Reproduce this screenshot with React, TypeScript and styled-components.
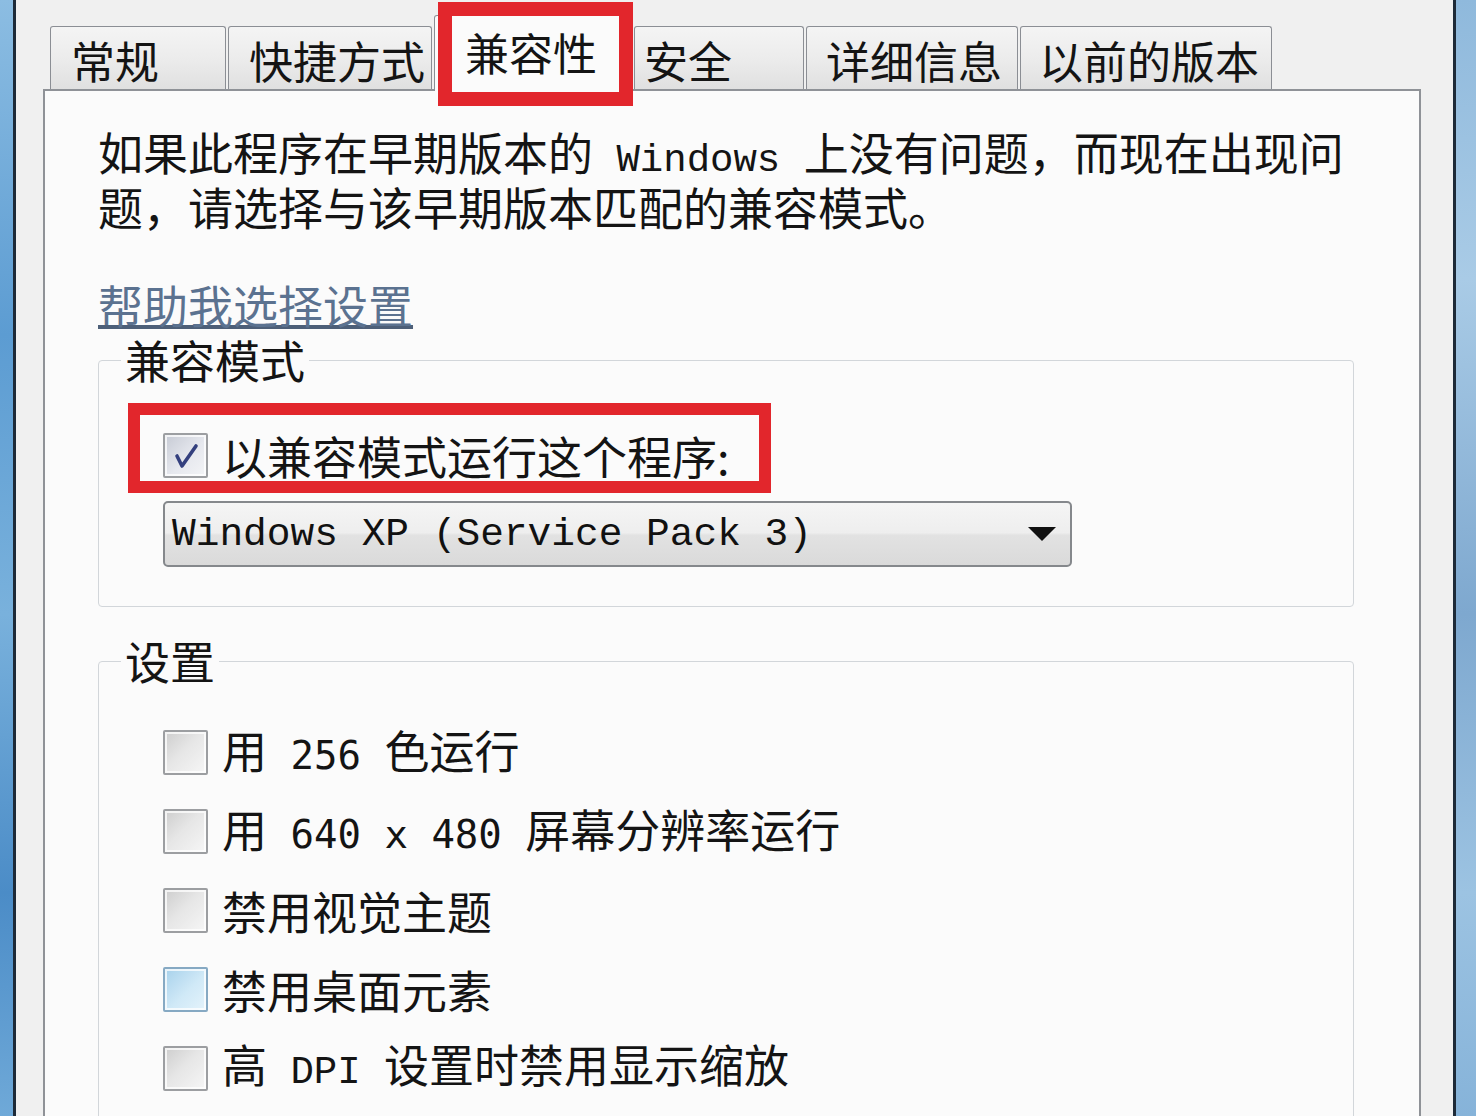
import React from "react";
import styled, { createGlobalStyle } from "styled-components";

// Windows 7 属性对话框 - 兼容性页（放大截图）

type BoxState = "off" | "hover" | "checked";

interface TabInfo {
  label: string;
  width: number;
  pad: number;
  active?: boolean;
}

const tabs: TabInfo[] = [
  { label: "常规", width: 176, pad: 20 },
  { label: "快捷方式", width: 204, pad: 20 },
  { label: "兼容性", width: 198, pad: 30, active: true },
  { label: "安全", width: 170, pad: 9 },
  { label: "详细信息", width: 212, pad: 19 },
  { label: "以前的版本", width: 252, pad: 18 },
];

const GlobalStyle = createGlobalStyle`
  html, body {
    margin: 0;
    padding: 0;
    background: #f0f0f0;
  }
  body {
    font-family: "Noto Sans CJK SC", "Liberation Sans", sans-serif;
    color: #161616;
  }
  * {
    box-sizing: border-box;
  }
`;

const Latin = styled.span<{ $face: "serif" | "sans" }>`
  font-family: ${(p) =>
      p.$face === "serif" ? '"Liberation Mono"' : '"DejaVu Sans Mono"'},
    monospace;
  font-size: 39px;
  white-space: pre;
`;

const settings: { key: string; state: BoxState; label: React.ReactNode }[] = [
  {
    key: "256",
    state: "off",
    label: (
      <>
        用<Latin $face="sans"> 256 </Latin>色运行
      </>
    ),
  },
  {
    key: "640",
    state: "off",
    label: (
      <>
        用<Latin $face="sans"> 640 x 480 </Latin>屏幕分辨率运行
      </>
    ),
  },
  { key: "theme", state: "off", label: "禁用视觉主题" },
  { key: "desktop", state: "hover", label: "禁用桌面元素" },
  {
    key: "dpi",
    state: "off",
    label: (
      <>
        高<Latin $face="serif"> DPI </Latin>设置时禁用显示缩放
      </>
    ),
  },
];

const CheckMark = () => (
  <svg width="30" height="30" viewBox="0 0 30 30">
    <polyline
      points="6,15 11,25 25,5"
      fill="none"
      stroke="#34407e"
      strokeWidth="3.6"
      strokeLinecap="round"
      strokeLinejoin="round"
    />
  </svg>
);

const App = () => {
  return (
    <Screen>
      <GlobalStyle />
      <WindowEdge $side="left" />
      <Dialog>
        <TabStrip>
          {tabs.map((tab) => (
            <Tab
              key={tab.label}
              $width={tab.width}
              $pad={tab.pad}
              $active={tab.active}
            >
              {tab.label}
              {tab.active && (
                <RedFrame $top={-14} $left={3} $width={195} $height={104} $thick={14} />
              )}
            </Tab>
          ))}
        </TabStrip>
        <Panel>
          <Intro>
            如果此程序在早期版本的<Latin $face="serif"> Windows </Latin>上没有问题，而现在出现问
            <br />
            题，请选择与该早期版本匹配的兼容模式。
          </Intro>
          <HelpLink href="#">帮助我选择设置</HelpLink>

          <Group $gap={9} $bottom={39}>
            <GroupTitle>兼容模式</GroupTitle>
            <GroupBody $top={50} $gap={23}>
              <CheckRow>
                <Box $state="checked">
                  <CheckMark />
                </Box>
                <Label>以兼容模式运行这个程序:</Label>
                <RedFrame $top={-30} $left={-35} $width={643} $height={90} $thick={12} />
              </CheckRow>
              <Select>
                <span>Windows XP (Service Pack 3)</span>
                <svg width="28" height="14" viewBox="0 0 28 14">
                  <polygon points="0,0 28,0 14,14" fill="#111" />
                </svg>
              </Select>
            </GroupBody>
          </Group>

          <Group $gap={31} $bottom={60}>
            <GroupTitle>设置</GroupTitle>
            <GroupBody $top={46} $gap={34}>
              {settings.map((item) => (
                <CheckRow key={item.key}>
                  <Box $state={item.state} />
                  <Label>{item.label}</Label>
                </CheckRow>
              ))}
            </GroupBody>
          </Group>
        </Panel>
      </Dialog>
      <WindowEdge $side="right" />
    </Screen>
  );
};

const Screen = styled.div`
  display: flex;
  width: 1476px;
  height: 1116px;
  overflow: hidden;
`;

const WindowEdge = styled.div<{ $side: "left" | "right" }>`
  flex: none;
  width: ${(p) => (p.$side === "left" ? 16 : 23)}px;
  background: ${(p) =>
    p.$side === "left"
      ? "linear-gradient(180deg, #8cbde2 0%, #5c9cd2 30%, #79b1dc 55%, #4b8cc7 80%, #6fa9d8 100%)"
      : "linear-gradient(180deg, #8fb9dc 0%, #a9cbe6 25%, #7ea8cf 55%, #9cc3e2 80%, #86b3d9 100%)"};
  border-${(p) => (p.$side === "left" ? "right" : "left")}: 3px solid #1d2a38;
`;

const Dialog = styled.div`
  flex: 1;
  min-width: 0;
  display: flex;
  flex-direction: column;
  padding: 15px 32px 0 27px;
  background: #f0f0f0;
`;

const TabStrip = styled.div`
  position: relative;
  z-index: 1;
  display: flex;
  align-items: flex-end;
  gap: 2px;
  height: 74px;
  padding-left: 7px;
`;

const Tab = styled.div<{ $width: number; $pad: number; $active?: boolean }>`
  position: relative;
  flex: none;
  display: flex;
  align-items: center;
  width: ${(p) => p.$width}px;
  height: ${(p) => (p.$active ? 76 : 63)}px;
  margin-bottom: ${(p) => (p.$active ? -2 : 0)}px;
  padding: ${(p) => (p.$active ? 0 : 4)}px 0 ${(p) => (p.$active ? 4 : 0)}px
    ${(p) => p.$pad}px;
  border: 1px solid #8b8e94;
  border-bottom: none;
  border-radius: 3px 3px 0 0;
  background: ${(p) =>
    p.$active
      ? "#fbfbfb"
      : "linear-gradient(180deg, #f4f4f4 0%, #ececec 50%, #e0e0e0 100%)"};
  font-size: 44px;
  line-height: 46px;
  white-space: nowrap;
  color: #141414;
`;

const RedFrame = styled.span<{
  $top: number;
  $left: number;
  $width: number;
  $height: number;
  $thick: number;
}>`
  position: absolute;
  top: ${(p) => p.$top}px;
  left: ${(p) => p.$left}px;
  width: ${(p) => p.$width}px;
  height: ${(p) => p.$height}px;
  border: ${(p) => p.$thick}px solid #e2262c;
  pointer-events: none;
`;

const Panel = styled.div`
  flex: 1;
  background: #fbfbfb;
  border: 2px solid #8f9297;
  border-bottom: none;
  padding: 38px 65px 0 53px;
`;

const Intro = styled.p`
  margin: 0;
  font-size: 45px;
  line-height: 46px;
  white-space: nowrap;
  color: #141414;
`;

const HelpLink = styled.a`
  display: block;
  width: fit-content;
  margin-top: 52px;
  font-size: 45px;
  line-height: 46px;
  color: #5b7290;
  text-decoration: underline;
  text-decoration-color: #4d5f78;
  text-underline-offset: 1px;
`;

const Group = styled.fieldset<{ $gap: number; $bottom: number }>`
  min-width: 0;
  margin: ${(p) => p.$gap}px 0 0;
  padding: 0 0 ${(p) => p.$bottom}px 22px;
  border: 1px solid #d2d6da;
  border-radius: 4px;
`;

const GroupTitle = styled.legend`
  padding: 0 4px;
  font-size: 45px;
  line-height: 46px;
  color: #141414;
`;

const GroupBody = styled.div<{ $top: number; $gap: number }>`
  display: flex;
  flex-direction: column;
  align-items: flex-start;
  gap: ${(p) => p.$gap}px;
  padding: ${(p) => p.$top}px 0 0 42px;
`;

const CheckRow = styled.label`
  position: relative;
  display: flex;
  align-items: center;
  gap: 14px;
  height: 45px;
`;

const Label = styled.span`
  font-size: 45px;
  line-height: 46px;
  white-space: nowrap;
  color: #141414;
`;

const Box = styled.span<{ $state: BoxState }>`
  flex: none;
  display: flex;
  align-items: center;
  justify-content: center;
  width: 45px;
  height: 45px;
  border: 2px solid ${(p) => (p.$state === "hover" ? "#86a9c3" : "#9c9ea1")};
  border-radius: 2px;
  background: ${(p) =>
    p.$state === "hover"
      ? "linear-gradient(135deg, #a7d1eb 0%, #d0e9f7 55%, #e4f3fb 100%)"
      : p.$state === "checked"
      ? "linear-gradient(135deg, #c6cad4 0%, #e6e8ee 55%, #f3f4f6 100%)"
      : "linear-gradient(135deg, #cdcdcd 0%, #e6e6e6 45%, #f6f6f6 100%)"};
  box-shadow: inset 0 0 0 2px rgba(255, 255, 255, 0.75);
`;

const Select = styled.div`
  display: flex;
  align-items: center;
  justify-content: space-between;
  width: 909px;
  height: 66px;
  padding: 0 14px 0 7px;
  border: 2px solid #85888c;
  border-radius: 5px;
  background: linear-gradient(
    180deg,
    #f5f5f5 0%,
    #eeeeee 48%,
    #e2e2e2 52%,
    #dadada 100%
  );
  font-family: "Liberation Mono", monospace;
  font-size: 39.5px;
  white-space: pre;
  color: #111;
`;

export default App;
